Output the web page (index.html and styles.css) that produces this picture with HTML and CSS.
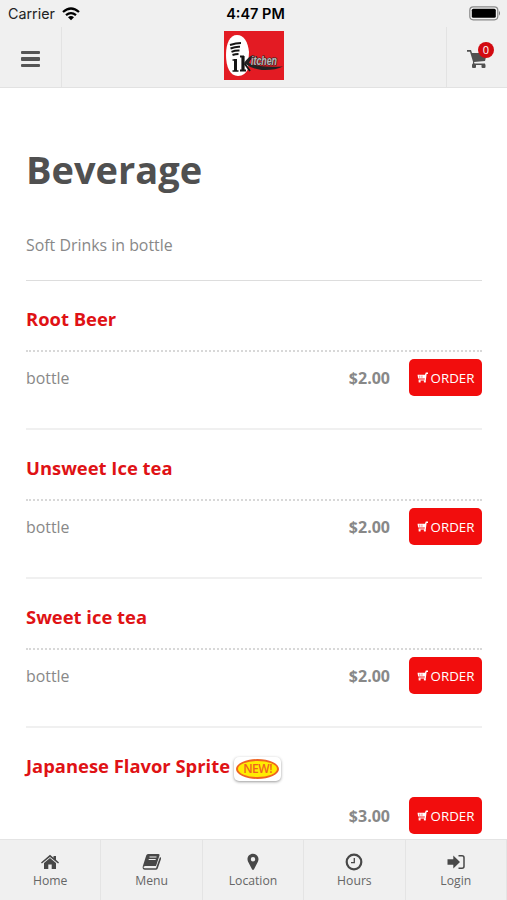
FILE: index.html
```html
<!DOCTYPE html>
<html lang="en">
<head>
<meta charset="utf-8">
<title>Beverage</title>
<link rel="stylesheet" href="styles.css">
</head>
<body>
<svg class="defs" width="0" height="0" aria-hidden="true">
  <symbol id="cart" viewBox="0 0 20 20"><path d="M0 1h4l1 3h15l-2 8-11 1 .5 1.500H18v1.500H5.500l.6-3L3 2.700H0z"/><rect x="5" y="15" width="4" height="4" rx="1"/><rect x="14.500" y="15" width="4" height="4" rx="1"/></symbol>
  <symbol id="mini" viewBox="0 0 20 20"><path d="M20 1v2.500h-2.500L16 15.500H3V13.500h11l.2-1.500H2L1 5h13.500L16 1z"/><path d="M5 6.500v4M9 6.500v4" stroke="#f20d0d" stroke-width="1"/><rect x="3" y="15" width="3.500" height="4"/><rect x="12.500" y="15" width="3.500" height="4"/></symbol>
</svg>
<div class="app">
  <div class="status">
    <div class="carrier">Carrier
      <svg width="18" height="14" viewBox="0 0 18 14"><g fill="none" stroke="#000" stroke-width="2.300"><path d="M1 5Q9-2 17 5"/><path d="M4 8.200Q9 4 14 8.200"/></g><path d="M6 10.300q3-2.500 6 0L9 13.200z"/></svg>
    </div>
    <div class="time">4:47 PM</div>
    <div class="battery"><svg width="33" height="15" viewBox="0 0 33 15"><rect x="1.800" y=".8" width="28" height="13" rx="3.500" fill="#f4f4f4" stroke="#888" stroke-width="1.200"/><rect x="3.800" y="2.800" width="24" height="9" rx="1.500"/><path d="M31 4.800q2 2.500 0 5z" fill="#777"/></svg></div>
  </div>
  <header class="header">
    <div class="burger"><i></i><i></i><i></i></div>
    <div class="brand">
      <svg width="60" height="49" viewBox="0 0 60 49">
        <rect width="60" height="49" fill="#e31b23"/>
        <path d="M13 4c7 0 11 7 12 17l-1 17c-2 4-5 7-10 7C6 45 2 36 2 24S6 4 13 4z" fill="#fff"/>
        <g fill="none" stroke="#151515"><path d="M6 14q6-2 11-2M6.500 17.500q5-2 9.500-1.700M7.500 20.800q4-1.600 8-1.300M8.500 24q3-1 6-1" stroke-width="1.900"/><path d="M8.500 29h3M8.500 40h6" stroke-width="1.500"/><path d="M11.500 28v12" stroke-width="3"/><path d="M19 25v15" stroke-width="3.200"/><path d="M16 25.500h4M16 39.500h6M27 27l-6 6 5 7" stroke-width="1.800"/></g>
        <path d="M20 32q5-7 9-8-3 5-4 8 10 5 34 3.500-8 4-21 3.500-10-1-18-7z" fill="#222"/>
        <text x="27" y="34" class="logo-text" textLength="26" lengthAdjust="spacingAndGlyphs">itchen</text>
      </svg>
    </div>
    <div class="basket"><svg width="20" height="20" viewBox="0 0 20 20"><use href="#cart"/></svg><span class="count">0</span></div>
  </header>
  <main class="content">
    <h1>Beverage</h1>
    <p class="lead">Soft Drinks in bottle</p>
    <section class="item">
      <h2>Root Beer</h2>
      <div class="row"><span class="size">bottle</span><b class="price">$2.00</b><a class="order"><svg width="11" height="11"><use href="#mini"/></svg>ORDER</a></div>
    </section>
    <section class="item">
      <h2>Unsweet Ice tea</h2>
      <div class="row"><span class="size">bottle</span><b class="price">$2.00</b><a class="order"><svg width="11" height="11"><use href="#mini"/></svg>ORDER</a></div>
    </section>
    <section class="item">
      <h2>Sweet ice tea</h2>
      <div class="row"><span class="size">bottle</span><b class="price">$2.00</b><a class="order"><svg width="11" height="11"><use href="#mini"/></svg>ORDER</a></div>
    </section>
    <section class="item last">
      <h2>Japanese Flavor Sprite <span class="new"><span>NEW!</span></span></h2>
      <div class="row"><span class="size"></span><b class="price">$3.00</b><a class="order"><svg width="11" height="11"><use href="#mini"/></svg>ORDER</a></div>
    </section>
  </main>
  <nav class="tabs">
    <a><svg width="18" height="18" viewBox="0 0 18 18"><path d="M0 9.500L9 1.700l3.500 3V3H15v3.800l3 2.700-.9 1L9 3.900.9 10.500z"/><path d="M3 10l6-5 6 5v6h-4.300v-4.500H7.300V16H3z"/></svg>Home</a>
    <a><svg width="20" height="18" viewBox="0 0 20 18"><path d="M6 1h10.500q1.500 0 1 1.500L14 13H3.300q-2 .3-1.800 1.300.2.900 1.500.900h11L18 4q1.500.5 1 2l-3.300 9.500q-.5 1.300-2 1.300H3q-3-.4-2.200-3.500L4.200 2.500Q4.700 1 6 1z"/><path d="M7.500 4h7M6.700 6.500h7" stroke="#f0f0f0" stroke-width="1"/></svg>Menu</a>
    <a><svg width="12" height="18" viewBox="0 0 12 18"><path fill-rule="evenodd" d="M6 .8c3.200 0 5.500 2.300 5.500 5.300 0 1.500-.4 2.300-1 3.500L7 16.300q-1 1.500-2 0L1.500 9.600C.9 8.400.5 7.600.5 6.100.5 3.100 2.800.8 6 .8zM6 4a2.200 2.200 0 1 0 0 4.400A2.200 2.200 0 0 0 6 4z"/></svg>Location</a>
    <a><svg width="18" height="18" viewBox="0 0 18 18"><circle cx="9" cy="9" r="7.300" fill="none" stroke="#484848" stroke-width="2.200"/><path d="M9.300 5v4.700H6" fill="none" stroke="#484848" stroke-width="1.300"/></svg>Hours</a>
    <a><svg width="18" height="18" viewBox="0 0 18 18"><path d="M.5 6.300h5.800V2.500L13 9l-6.700 6.500v-3.800H.5z"/><path d="M11.500 2.700H15q2 0 2 2v8.600q0 2-2 2h-3.500" fill="none" stroke="#484848" stroke-width="1.500"/></svg>Login</a>
  </nav>
</div>
</body>
</html>
```
FILE: styles.css
```css
* { box-sizing: border-box; }
body { margin: 0; font-family: "Open Sans", sans-serif; color: #888; background: #fff; }
svg { display: block; }
.defs { position: absolute; }
.app { height: 900px; display: flex; flex-direction: column; overflow: hidden; }
.status { flex: none; height: 27px; background: #f0f0f0; display: grid; grid-template-columns: 1fr auto 1fr; align-items: center; padding: 0 6px 0 8px; font-family: Inter, sans-serif; font-size: 14px; color: #222; }
.carrier { display: flex; align-items: center; gap: 7px; font-size: 14.300px; }
.time { font-weight: 600; color: #000; font-size: 14.500px; padding-left: 2px; }
.battery { justify-self: end; }
.header { flex: none; height: 61px; background: #f0f0f0; border-bottom: 1px solid #e2e2e2; display: grid; grid-template-columns: 62px 1fr 61px; }
.burger { border-right: 1px solid #e3e3e3; padding: 24px 0 0 21px; display: flex; flex-direction: column; gap: 3px; }
.burger i { width: 19px; height: 3.400px; border-radius: 1px; background: #555; }
.brand { display: flex; justify-content: center; padding-top: 4px; }
.brand svg { overflow: visible; }
.logo-text { font: italic bold 12px "Liberation Sans", sans-serif; fill: #bbb; stroke: #222; stroke-width: 1.200px; paint-order: stroke; }
.basket { position: relative; border-left: 1px solid #e3e3e3; padding: 22px 0 0 20px; fill: #505050; }
.count { position: absolute; left: 31px; top: 15px; width: 16px; height: 16px; border-radius: 50%; background: #d20a11; color: #fff; font-size: 11px; line-height: 16px; text-align: center; }
.content { flex: 1; min-height: 0; overflow: hidden; padding: 0 25px 0 26px; }
h1 { margin: 55px 0 0; font-size: 38px; line-height: 52px; font-weight: 700; color: #505050; }
.lead { margin: 38px 0 0; height: 48px; font-size: 15.900px; line-height: 24px; border-bottom: 1px solid #ddd; }
.item { height: 149px; border-bottom: 2px solid #f0f0f0; }
h2 { margin: 0; height: 71px; padding-top: 25px; font-size: 18.400px; line-height: 26px; font-weight: 700; color: #df1215; border-bottom: 2px dotted #d8d8d8; display: flex; }
.row { display: flex; align-items: center; padding-top: 7px; }
.size { flex: 1; font-size: 15.900px; }
.price { font-size: 16px; margin-right: 19px; }
.order { width: 73px; height: 37px; border-radius: 5px; background: #f20d0d; color: #fff; fill: #fff; font-size: 13.300px; display: flex; align-items: center; justify-content: center; gap: 3px; }
.last h2 { height: 62px; border: 0; }
.new { width: 47px; height: 24px; margin: 4px 0 0 4px; border-radius: 5px; background: #fff; box-shadow: 0 1px 3px #999; padding: 2px; }
.new span { display: block; width: 43px; height: 20px; border: 2px solid #ef6420; border-radius: 50%; background: #ffec00; color: #ef6420; font-size: 12px; line-height: 16px; font-weight: 600; text-align: center; letter-spacing: -.5px; }
.tabs { flex: none; height: 61px; display: grid; grid-template-columns: repeat(5, 1fr); background: #f0f0f0; border-top: 1px solid #e4e4e4; }
.tabs a { display: flex; flex-direction: column; align-items: center; padding-top: 13px; gap: 1px; font-size: 12.200px; line-height: 18px; color: #666; fill: #484848; border-right: 1px solid #e4e4e4; }
```
